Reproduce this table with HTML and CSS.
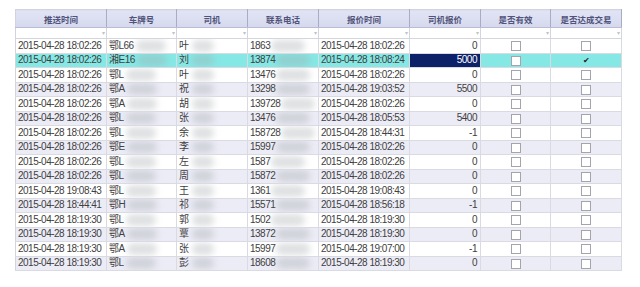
FILE: index.html
```html
<!DOCTYPE html>
<html lang="zh">
<head>
<meta charset="utf-8">
<title>报价列表</title>
<link rel="stylesheet" href="styles.css">
</head>
<body>
<div class="wrap">
<table class="grid">
<colgroup>
<col class="w91"><col class="w70"><col class="w71"><col class="w71"><col class="w91"><col class="w71"><col class="w70"><col class="w71">
</colgroup>
<thead>
<tr class="head">
<th>推送时间</th><th>车牌号</th><th>司机</th><th>联系电话</th><th>报价时间</th><th>司机报价</th><th>是否有效</th><th>是否达成交易</th>
</tr>
<tr class="filter">
<td><span class="arr">▾</span></td><td><span class="arr">▾</span></td><td><span class="arr">▾</span></td><td><span class="arr">▾</span></td><td><span class="arr">▾</span></td><td><span class="arr">▾</span></td><td><span class="arr">▾</span></td><td><span class="arr">▾</span></td>
</tr>
</thead>
<tbody>
<tr><td>2015-04-28 18:02:26</td><td>鄂L66<span class="smudge s1"></span></td><td>叶<span class="smudge s2"></span></td><td>1863<span class="smudge s3"></span></td><td>2015-04-28 18:02:26</td><td class="num">0</td><td class="c"><span class="cb"></span></td><td class="c"><span class="cb"></span></td></tr>
<tr class="hl"><td>2015-04-28 18:02:26</td><td>湘E16<span class="smudge s1"></span></td><td>刘<span class="smudge s2"></span></td><td>13874<span class="smudge s3"></span></td><td>2015-04-28 18:08:24</td><td class="num sel">5000</td><td class="c"><span class="cb"></span></td><td class="c"><span class="cb on">✔</span></td></tr>
<tr><td>2015-04-28 18:02:26</td><td>鄂L<span class="smudge s1"></span></td><td>叶<span class="smudge s2"></span></td><td>13476<span class="smudge s3"></span></td><td>2015-04-28 18:02:26</td><td class="num">0</td><td class="c"><span class="cb"></span></td><td class="c"><span class="cb"></span></td></tr>
<tr><td>2015-04-28 18:02:26</td><td>鄂A<span class="smudge s1"></span></td><td>祝<span class="smudge s2"></span></td><td>13298<span class="smudge s3"></span></td><td>2015-04-28 19:03:52</td><td class="num">5500</td><td class="c"><span class="cb"></span></td><td class="c"><span class="cb"></span></td></tr>
<tr><td>2015-04-28 18:02:26</td><td>鄂A<span class="smudge s1"></span></td><td>胡<span class="smudge s2"></span></td><td>139728<span class="smudge s3"></span></td><td>2015-04-28 18:02:26</td><td class="num">0</td><td class="c"><span class="cb"></span></td><td class="c"><span class="cb"></span></td></tr>
<tr><td>2015-04-28 18:02:26</td><td>鄂L<span class="smudge s1"></span></td><td>张<span class="smudge s2"></span></td><td>13476<span class="smudge s3"></span></td><td>2015-04-28 18:05:53</td><td class="num">5400</td><td class="c"><span class="cb"></span></td><td class="c"><span class="cb"></span></td></tr>
<tr><td>2015-04-28 18:02:26</td><td>鄂L<span class="smudge s1"></span></td><td>余<span class="smudge s2"></span></td><td>158728<span class="smudge s3"></span></td><td>2015-04-28 18:44:31</td><td class="num">-1</td><td class="c"><span class="cb"></span></td><td class="c"><span class="cb"></span></td></tr>
<tr><td>2015-04-28 18:02:26</td><td>鄂E<span class="smudge s1"></span></td><td>李<span class="smudge s2"></span></td><td>15997<span class="smudge s3"></span></td><td>2015-04-28 18:02:26</td><td class="num">0</td><td class="c"><span class="cb"></span></td><td class="c"><span class="cb"></span></td></tr>
<tr><td>2015-04-28 18:02:26</td><td>鄂L<span class="smudge s1"></span></td><td>左<span class="smudge s2"></span></td><td>1587<span class="smudge s3"></span></td><td>2015-04-28 18:02:26</td><td class="num">0</td><td class="c"><span class="cb"></span></td><td class="c"><span class="cb"></span></td></tr>
<tr><td>2015-04-28 18:02:26</td><td>鄂L<span class="smudge s1"></span></td><td>周<span class="smudge s2"></span></td><td>15872<span class="smudge s3"></span></td><td>2015-04-28 18:02:26</td><td class="num">0</td><td class="c"><span class="cb"></span></td><td class="c"><span class="cb"></span></td></tr>
<tr><td>2015-04-28 19:08:43</td><td>鄂L<span class="smudge s1"></span></td><td>王<span class="smudge s2"></span></td><td>1361<span class="smudge s3"></span></td><td>2015-04-28 19:08:43</td><td class="num">0</td><td class="c"><span class="cb"></span></td><td class="c"><span class="cb"></span></td></tr>
<tr><td>2015-04-28 18:44:41</td><td>鄂H<span class="smudge s1"></span></td><td>祁<span class="smudge s2"></span></td><td>15571<span class="smudge s3"></span></td><td>2015-04-28 18:56:18</td><td class="num">-1</td><td class="c"><span class="cb"></span></td><td class="c"><span class="cb"></span></td></tr>
<tr><td>2015-04-28 18:19:30</td><td>鄂L<span class="smudge s1"></span></td><td>郭<span class="smudge s2"></span></td><td>1502<span class="smudge s3"></span></td><td>2015-04-28 18:19:30</td><td class="num">0</td><td class="c"><span class="cb"></span></td><td class="c"><span class="cb"></span></td></tr>
<tr><td>2015-04-28 18:19:30</td><td>鄂A<span class="smudge s1"></span></td><td>覃<span class="smudge s2"></span></td><td>13872<span class="smudge s3"></span></td><td>2015-04-28 18:19:30</td><td class="num">0</td><td class="c"><span class="cb"></span></td><td class="c"><span class="cb"></span></td></tr>
<tr><td>2015-04-28 18:19:30</td><td>鄂A<span class="smudge s1"></span></td><td>张<span class="smudge s2"></span></td><td>15997<span class="smudge s3"></span></td><td>2015-04-28 19:07:00</td><td class="num">-1</td><td class="c"><span class="cb"></span></td><td class="c"><span class="cb"></span></td></tr>
<tr><td>2015-04-28 18:19:30</td><td>鄂L<span class="smudge s1"></span></td><td>彭<span class="smudge s2"></span></td><td>18608<span class="smudge s3"></span></td><td>2015-04-28 18:19:30</td><td class="num">0</td><td class="c"><span class="cb"></span></td><td class="c"><span class="cb"></span></td></tr>
</tbody>
</table>
</div>
</body>
</html>
```
FILE: styles.css
```css
html, body {
  margin: 0;
  padding: 0;
  background: #ffffff;
}
.wrap {
  padding: 9px 0 0 15px;
}
.grid {
  border-collapse: collapse;
  table-layout: fixed;
  width: 606px;
  font-family: "Liberation Sans", "Noto Sans CJK SC", sans-serif;
  font-size: 10px;
  letter-spacing: -0.5px;
  color: #404040;
  border: 1px solid #d2d3dc;
}
.w91 { width: 91px; }
.w70 { width: 70px; }
.w71 { width: 71px; }

.head th {
  height: 17px;
  padding: 0;
  background: linear-gradient(#e2e4f5, #d6d9ee);
  border-right: 1px solid #a9acc4;
  border-bottom: 1px solid #b9bcd2;
  font-family: "Noto Sans CJK SC", sans-serif;
  font-size: 8.5px;
  letter-spacing: 0;
  font-weight: bold;
  color: #50547a;
  text-align: center;
  vertical-align: middle;
}
.filter td {
  height: 10px;
  padding: 0 2px 0 0;
  background: #ffffff;
  border-right: 1px solid #d4d5de;
  border-bottom: 1px solid #d4d5de;
  text-align: right;
  line-height: 10px;
}
.arr {
  font-size: 6px;
  color: #c2c2c8;
  vertical-align: top;
}
tbody td {
  height: 13.5px;
  padding: 0 0 0 2px;
  line-height: 12px;
  border-right: 1px solid #d9dae2;
  border-bottom: 1px solid #d9dae2;
  white-space: nowrap;
  overflow: hidden;
  vertical-align: middle;
}
tbody tr:nth-child(even) td {
  background: #ececf6;
}
tbody tr.hl td {
  background: #86e8e5;
}
tbody tr.hl td.sel {
  background: #0d2169;
  color: #ffffff;
}
td.num {
  text-align: right;
  padding: 0 3px 0 0;
}
td.c {
  text-align: center;
  padding: 0;
}
.cb {
  display: inline-block;
  width: 8px;
  height: 8px;
  border: 1px solid #a4a4ad;
  background: #ffffff;
  vertical-align: middle;
  font-size: 7px;
  line-height: 8px;
  letter-spacing: 0;
  color: #222;
  text-align: center;
}
.cb.on {
  border-color: transparent;
  background: transparent;
  font-size: 8px;
}
.smudge {
  display: inline-block;
  height: 12px;
  vertical-align: middle;
  background: rgba(160, 166, 170, 0.35);
  filter: blur(3px);
  border-radius: 6px;
}
.s1 { width: 30px; margin-left: 2px; }
.s2 { width: 22px; margin-left: 3px; }
.s3 { width: 34px; margin-left: 1px; }
```
